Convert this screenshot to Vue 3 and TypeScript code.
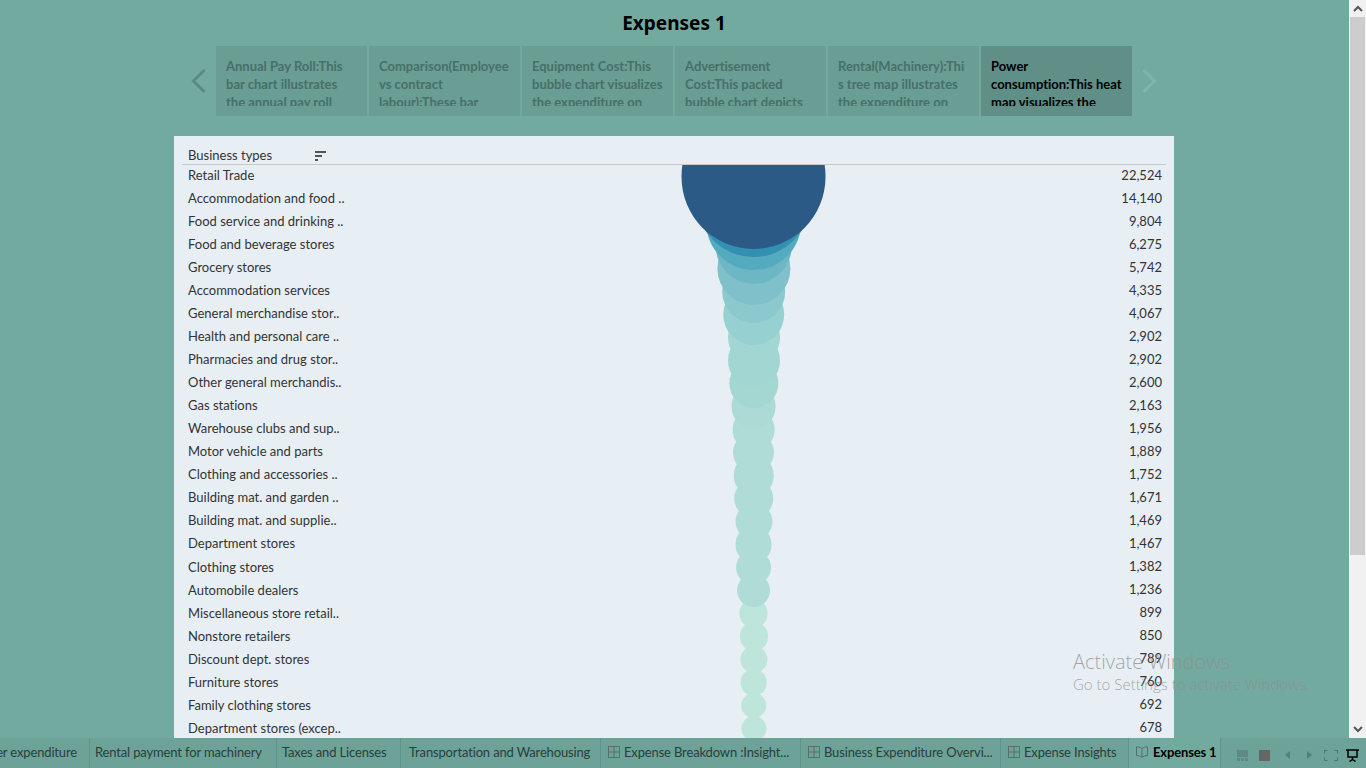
<script setup lang="ts">
import { computed } from 'vue';

const stories = [
  { lines: ['Annual Pay Roll:This', 'bar chart illustrates', 'the annual pay roll'], active: false },
  { lines: ['Comparison(Employee', 'vs contract', 'labour):These bar'], active: false },
  { lines: ['Equipment Cost:This', 'bubble chart visualizes', 'the expenditure on'], active: false },
  { lines: ['Advertisement', 'Cost:This packed', 'bubble chart depicts'], active: false },
  { lines: ['Rental(Machinery):Thi', 's tree map illustrates', 'the expenditure on'], active: false },
  { lines: ['Power', 'consumption:This heat', 'map visualizes the'], active: true },
];

const rows = [
  { name: 'Retail Trade', value: 22524, color: '#2c5a87' },
  { name: 'Accommodation and food ..', value: 14140, color: '#3490b0' },
  { name: 'Food service and drinking ..', value: 9804, color: '#54aabf' },
  { name: 'Food and beverage stores', value: 6275, color: '#6db7c5' },
  { name: 'Grocery stores', value: 5742, color: '#7fc0ca' },
  { name: 'Accommodation services', value: 4335, color: '#8cc9ce' },
  { name: 'General merchandise stor..', value: 4067, color: '#96d0d1' },
  { name: 'Health and personal care ..', value: 2902, color: '#a2d6d3' },
  { name: 'Pharmacies and drug stor..', value: 2902, color: '#a2d6d3' },
  { name: 'Other general merchandis..', value: 2600, color: '#a4d7d2' },
  { name: 'Gas stations', value: 2163, color: '#acdbd6' },
  { name: 'Warehouse clubs and sup..', value: 1956, color: '#afdcd7' },
  { name: 'Motor vehicle and parts', value: 1889, color: '#afdcd7' },
  { name: 'Clothing and accessories ..', value: 1752, color: '#afdcd7' },
  { name: 'Building mat. and garden ..', value: 1671, color: '#afdcd7' },
  { name: 'Building mat. and supplie..', value: 1469, color: '#afdcd7' },
  { name: 'Department stores', value: 1467, color: '#afdcd7' },
  { name: 'Clothing stores', value: 1382, color: '#afdcd7' },
  { name: 'Automobile dealers', value: 1236, color: '#afdcd7' },
  { name: 'Miscellaneous store retail..', value: 899, color: '#bde5da' },
  { name: 'Nonstore retailers', value: 850, color: '#bde5da' },
  { name: 'Discount dept. stores', value: 789, color: '#bde5da' },
  { name: 'Furniture stores', value: 760, color: '#bde5da' },
  { name: 'Family clothing stores', value: 692, color: '#bde5da' },
  { name: 'Department stores (excep..', value: 678, color: '#bde5da' },
];

const ROW_H = 23;

// area scale, biggest bubble is painted last so it sits on top
const bubbles = computed(() =>
  rows
    .map((r, i) => {
      const radius = Math.sqrt(r.value) * 0.483;
      return {
        key: r.name,
        style: {
          width: radius * 2 + 'px',
          height: radius * 2 + 'px',
          top: i * ROW_H + 11.5 - radius + 'px',
          background: r.color,
        },
      };
    })
    .reverse()
);

const tabs = [
  { label: 'Power expenditure', width: 90, pad: 0, icon: false, cut: true },
  { label: 'Rental payment for machinery', width: 187, pad: 5, icon: false },
  { label: 'Taxes and Licenses', width: 124, pad: 5, icon: false },
  { label: 'Transportation and Warehousing', width: 200, pad: 8, icon: false },
  { label: 'Expense Breakdown :Insight...', width: 200, pad: 7, icon: true },
  { label: 'Business Expenditure Overvi...', width: 200, pad: 7, icon: true },
  { label: 'Expense Insights', width: 128, pad: 7, icon: true },
];
</script>

<template>
  <div class="page">
    <div class="main">
      <h1 class="title">Expenses 1</h1>

      <div class="story-nav">
        <svg class="nav-arrow" width="16" height="24" viewBox="0 0 16 24">
          <path d="M14.500 1 3.500 12l11 11" fill="none" stroke="#5a8a84" stroke-width="3" />
        </svg>
        <div
          v-for="(s, i) in stories"
          :key="i"
          class="story"
          :class="{ active: s.active }"
        >
          <div class="story-text">
            <div v-for="line in s.lines" :key="line">{{ line }}</div>
          </div>
        </div>
        <svg class="nav-arrow" width="16" height="24" viewBox="0 0 16 24">
          <path d="M1.500 1l11 11-11 11" fill="none" stroke="#83b3ab" stroke-width="3" />
        </svg>
      </div>

      <div class="panel">
        <div class="panel-head">
          <span class="head-label">Business types</span>
          <svg class="sort-icon" width="11" height="11" viewBox="0 0 11 11">
            <path d="M0 1h11v2H0zM0 5h7v2H0zM0 9h3v2H0z" fill="#555" />
          </svg>
        </div>
        <div class="rows">
          <div v-for="r in rows" :key="r.name" class="row">
            <span class="row-name">{{ r.name }}</span>
            <span>{{ r.value.toLocaleString('en-US') }}</span>
          </div>
          <div class="bubbles">
            <div v-for="b in bubbles" :key="b.key" class="bubble" :style="b.style"></div>
          </div>
        </div>
      </div>
    </div>

    <div class="scrollbar">
      <div class="scroll-btn">
        <svg width="10" height="7" viewBox="0 0 10 7"><path d="M1 6l4-4 4 4" fill="none" stroke="#555" stroke-width="2" /></svg>
      </div>
      <div class="thumb"></div>
      <div class="scroll-btn bottom">
        <svg width="10" height="7" viewBox="0 0 10 7"><path d="M1 1l4 4 4-4" fill="none" stroke="#555" stroke-width="2" /></svg>
      </div>
    </div>

    <div class="tabbar">
      <div
        v-for="t in tabs"
        :key="t.label"
        class="tab"
        :class="{ cut: t.cut }"
        :style="{ width: t.width + 'px', paddingLeft: t.pad + 'px' }"
      >
        <svg v-if="t.icon" class="tab-icon" width="12" height="12" viewBox="0 0 12 12">
          <path d="M.5.5h11v11H.5zM6 .5v11M.5 6h11" fill="none" stroke="#5d6e6a" />
        </svg>
        <span>{{ t.label }}</span>
      </div>
      <div class="tab current">
        <svg class="tab-icon" width="12" height="12" viewBox="0 0 12 12">
          <path d="M6 2.500C4.700 1.500 2.500.8.500.8v8.700c2 0 4.200.7 5.500 1.800 1.300-1.100 3.500-1.800 5.500-1.800V.8c-2 0-4.200.7-5.500 1.700zm0 0v8.800" fill="none" stroke="#55706b" />
        </svg>
        <span>Expenses 1</span>
      </div>
      <div class="controls">
        <svg width="11" height="11" viewBox="0 0 11 11">
          <path d="M0 0h11v7H0zM0 8h3v3H0zM4 8h3v3H4zM8 8h3v3H8z" fill="#5d8a84" />
        </svg>
        <svg width="11" height="11" viewBox="0 0 11 11"><path d="M0 0h11v11H0z" fill="#666" /></svg>
        <svg width="5" height="8" viewBox="0 0 5 8"><path d="M5 0v8L0 4z" fill="#54807a" /></svg>
        <svg width="5" height="8" viewBox="0 0 5 8"><path d="M0 0v8l5-4z" fill="#54807a" /></svg>
        <svg width="14" height="11" viewBox="0 0 14 11">
          <path d="M.5 3.500v-3h3M10.500.5h3v3M13.500 7.500v3h-3M3.500 10.500h-3v-3" fill="none" stroke="#54706c" />
        </svg>
        <svg width="13" height="13" viewBox="0 0 13 13">
          <path d="M0 1h13M2 1v7h9V1M6.500 8v2.500M3.500 12.500l3-2 3 2" fill="none" stroke="#000" stroke-width="1.500" />
        </svg>
      </div>
    </div>

    <div class="activate">
      <div class="activate-big">Activate Windows</div>
      <div class="activate-small">Go to Settings to activate Windows.</div>
    </div>
  </div>
</template>

<style>
html,
body {
  margin: 0;
  overflow: hidden;
}
</style>

<style scoped>
.page {
  position: relative;
  width: 1366px;
  height: 768px;
  display: grid;
  grid-template-columns: 1349px 17px;
  grid-template-rows: 738px 30px;
  overflow: hidden;
  background: #73aaa0;
  font-family: Lato, "Liberation Sans", sans-serif;
  font-variant-ligatures: none;
  color: #333;
}

.main {
  display: flex;
  flex-direction: column;
  align-items: center;
  overflow: hidden;
  padding-right: 1px;
}

.title {
  margin: 10px 0 0;
  height: 36px;
  line-height: 27px;
  font-family: "Noto Sans", sans-serif;
  font-size: 19px;
  font-weight: 700;
  color: #000;
}

.story-nav {
  display: flex;
  align-items: center;
  gap: 2px;
  height: 70px;
}

.nav-arrow {
  flex: none;
  margin: 0 8px 0 0;
}

.nav-arrow:last-child {
  margin: 0 0 0 8px;
}

.story {
  width: 151px;
  height: 70px;
  box-sizing: border-box;
  padding: 11px 0 0 10px;
  background: #6a9d93;
  color: #46706a;
  font-size: 13px;
  font-weight: 700;
  line-height: 18px;
}

.story.active {
  background: #5f8f87;
  color: #000;
}

.story-text {
  height: 49px;
  overflow: hidden;
  white-space: nowrap;
}

.panel {
  width: 1000px;
  margin-top: 20px;
  flex: 1;
  display: flex;
  flex-direction: column;
  min-height: 0;
  background: #e7eff5;
  font-size: 13px;
}

.panel-head {
  margin: 0 8px;
  height: 29px;
  box-sizing: border-box;
  padding: 11px 0 0 6px;
  display: flex;
  align-items: flex-start;
  border-bottom: 1px solid #c8c8c8;
  line-height: 16px;
}

.head-label {
  width: 127px;
}

.sort-icon {
  margin-top: 3px;
}

.rows {
  position: relative;
  flex: 1;
  min-height: 0;
  overflow: hidden;
}

.row {
  position: relative;
  z-index: 1;
  display: flex;
  justify-content: space-between;
  height: 23px;
  padding: 0 12px 0 14px;
  line-height: 21px;
}

.row:nth-child(n + 18) .row-name {
  padding-top: 1px;
}

.bubbles {
  position: absolute;
  inset: 0;
  z-index: 2;
}

.bubble {
  position: absolute;
  left: 579.5px;
  transform: translateX(-50%);
  border-radius: 50%;
}

.scrollbar {
  grid-column: 2;
  grid-row: 1 / span 2;
  display: flex;
  flex-direction: column;
  background: #f1f1f1;
  height: 738px;
}

.scroll-btn {
  height: 17px;
  display: flex;
  align-items: center;
  justify-content: center;
  flex: none;
}

.scroll-btn.bottom {
  margin-top: auto;
}

.thumb {
  height: 538px;
  margin: 0 1px;
  background: #cdcdcd;
}

.tabbar {
  grid-column: 1 / span 2;
  grid-row: 2;
  z-index: 3;
  display: flex;
  align-items: stretch;
  background: #6ca298;
  font-size: 13px;
  letter-spacing: -0.15px;
  color: #2c3d3b;
  width: 1366px;
}

.tab {
  flex: none;
  box-sizing: border-box;
  display: flex;
  align-items: center;
  gap: 4px;
  padding-bottom: 2px;
  border-right: 1px solid #619489;
  white-space: nowrap;
  overflow: hidden;
}

.tab.cut {
  justify-content: flex-end;
  padding-right: 12px;
}

.tab-icon {
  flex: none;
}

.tab.current {
  width: 92px;
  padding-left: 7px;
  gap: 5px;
  background: #73aaa0;
  color: #000;
  font-weight: 700;
}

.controls {
  flex: 1;
  display: flex;
  align-items: center;
  padding: 4px 0 0 16px;
}

.controls svg:nth-child(1) {
  margin-right: 11px;
}

.controls svg:nth-child(2) {
  margin-right: 15px;
}

.controls svg:nth-child(3) {
  margin-right: 17px;
}

.controls svg:nth-child(4) {
  margin-right: 12px;
}

.controls svg:nth-child(5) {
  margin-right: 8px;
}

.activate {
  position: absolute;
  left: 1073px;
  top: 649px;
  z-index: 4;
  font-family: "Open Sans", sans-serif;
  font-weight: 300;
  color: rgba(140, 140, 140, 0.75);
  pointer-events: none;
}

.activate-big {
  font-size: 20px;
  line-height: 25px;
}

.activate-small {
  font-size: 15px;
  line-height: 21px;
}
</style>
